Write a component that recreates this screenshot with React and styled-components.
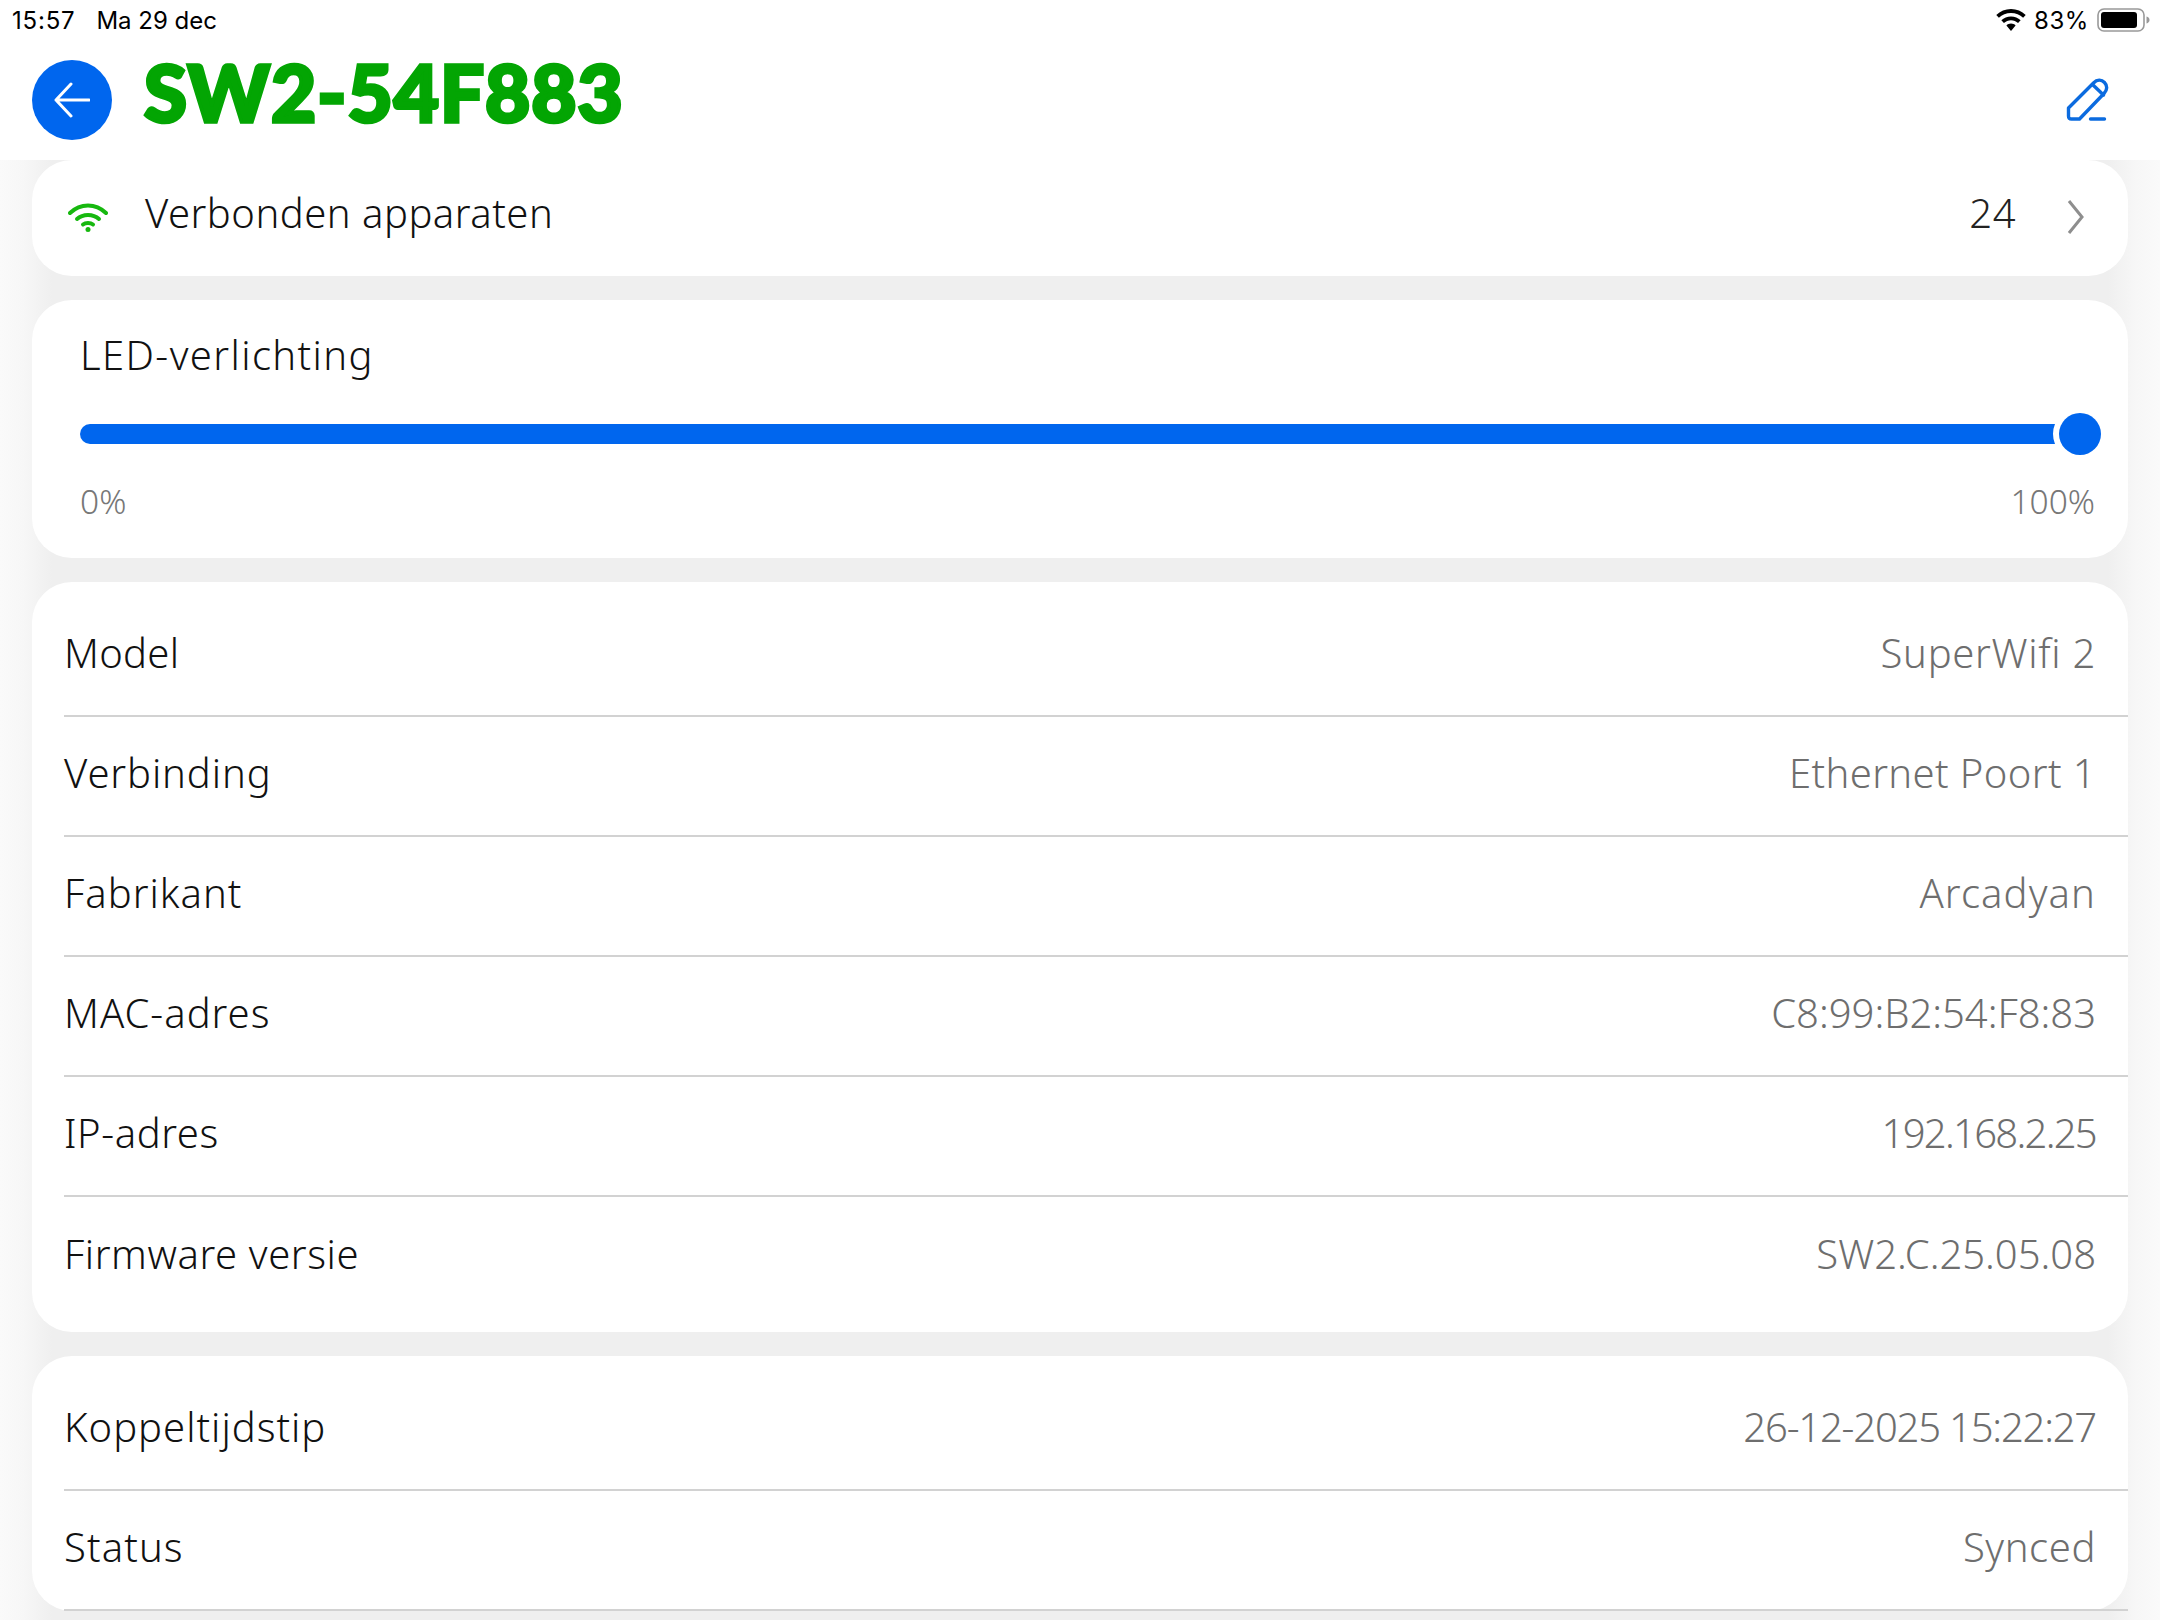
import styled, { createGlobalStyle } from "styled-components";

const GlobalStyle = createGlobalStyle`
  html, body {
    margin: 0;
    padding: 0;
    background: #f7f7f7;
  }
`;

const Screen = styled.div`
  width: 2160px;
  height: 1620px;
  overflow: hidden;
  font-family: "Noto Sans", sans-serif;
  font-weight: 350;
  background: linear-gradient(90deg, #fafafa 0, #f7f7f7 24px, #efefef 52px, #efefef 2108px, #f7f7f7 2136px, #fafafa 100%);
`;

const Header = styled.header`
  height: 160px;
  background: #fff;
`;

const StatusBar = styled.div`
  height: 40px;
  display: flex;
  align-items: center;
  justify-content: space-between;
  padding: 0 10px 0 12px;
  font-family: Inter, sans-serif;
  font-weight: 400;
  font-size: 24px;
  color: #000;
`;

const StatusGroup = styled.div`
  display: flex;
  align-items: center;
  gap: ${(props) => props.$gap}px;
`;

const StatusText = styled.span`
  letter-spacing: ${(props) => props.$spacing || 0}px;
`;

const TitleBar = styled.div`
  height: 80px;
  margin-top: 20px;
  display: flex;
  align-items: center;
  padding: 0 50px 0 32px;
`;

const BackButton = styled.button`
  width: 80px;
  height: 80px;
  border: 0;
  padding: 0;
  border-radius: 50%;
  background: #0066ee;
  display: flex;
  align-items: center;
  justify-content: center;
`;

const Title = styled.h1`
  margin: 0 0 17px 32px;
  flex: 1;
  font-family: Lato, sans-serif;
  font-weight: 900;
  font-size: 78px;
  line-height: 80px;
  letter-spacing: 1px;
  color: #03a503;
  -webkit-text-stroke: 3.5px #03a503;
`;

const Content = styled.main`
  display: flex;
  flex-direction: column;
  gap: 24px;
  padding: 0 32px;
`;

const Card = styled.section`
  background: #fff;
  border-radius: 40px;
  padding-top: ${(props) => props.$top || 0}px;
  padding-bottom: ${(props) => props.$bottom || 0}px;
`;

const LinkRow = styled.div`
  height: 116px;
  display: flex;
  align-items: center;
  padding: 0 43px 0 36px;
  font-size: 40px;
  letter-spacing: 0.5px;
  color: #111;
`;

const RowIcon = styled.span`
  display: flex;
  margin-bottom: 2px;
`;

const LinkLabel = styled.span`
  flex: 1;
  margin: 0 0 11px 37px;
`;

const Count = styled.span`
  color: #222;
  margin: 0 51px 11px 0;
`;

const SliderCard = styled(Card)`
  height: 258px;
  padding: 0 33px 0 48px;
  display: flex;
  flex-direction: column;
`;

const SliderTitle = styled.div`
  margin-top: 27px;
  font-size: 40px;
  line-height: 56px;
  letter-spacing: 1.4px;
  color: #111;
`;

const Track = styled.div`
  margin-top: 41px;
  height: 20px;
  position: relative;
  border-radius: 10px;
  background: #0066ee;
`;

const Thumb = styled.div`
  position: absolute;
  right: -6px;
  top: -11px;
  width: 42px;
  height: 42px;
  border-radius: 50%;
  background: #0066ee;
  box-shadow: 0 0 0 6px #fff;
`;

const SliderLabels = styled.div`
  margin-top: 34px;
  display: flex;
  justify-content: space-between;
  font-size: 33.5px;
  color: #777;
`;

const Row = styled.div`
  height: ${(props) => (props.$last ? "113px" : "111px")};
  margin-left: 32px;
  padding: 0 32px 7px 0;
  display: flex;
  align-items: center;
  justify-content: space-between;
  font-size: 40px;
  border-bottom: ${(props) => (props.$last ? "0" : "2px solid #d2d2d2")};
`;

const Label = styled.span`
  color: #111;
  letter-spacing: ${(props) => props.$spacing}px;
`;

const Value = styled.span`
  color: #6e6e6e;
  letter-spacing: ${(props) => props.$spacing}px;
`;

const deviceRows = [
  { label: "Model", value: "SuperWifi 2", labelSpacing: 0.3, valueSpacing: 0.7 },
  { label: "Verbinding", value: "Ethernet Poort 1", labelSpacing: 0.9, valueSpacing: 0.4 },
  { label: "Fabrikant", value: "Arcadyan", labelSpacing: 1, valueSpacing: 1.1 },
  { label: "MAC-adres", value: "C8:99:B2:54:F8:83", labelSpacing: 1, valueSpacing: 0 },
  { label: "IP-adres", value: "192.168.2.25", labelSpacing: 0.6, valueSpacing: -1.7 },
  { label: "Firmware versie", value: "SW2.C.25.05.08", labelSpacing: 0.6, valueSpacing: 0 },
];

const syncRows = [
  { label: "Koppeltijdstip", value: "26-12-2025 15:22:27", labelSpacing: 1, valueSpacing: -1.2 },
  { label: "Status", value: "Synced", labelSpacing: 1.1, valueSpacing: 0.6 },
];

const WifiIcon = () => (
  <svg width="40" height="29" viewBox="0 0 40 29" fill="none" stroke="#17b80f" strokeWidth="4" strokeLinecap="round">
    <path d="M2 10C12.500 0 27.500 0 38 10" />
    <path d="M9 16C15 10.500 25 10.500 31 16" />
    <path d="M15 21.500C17.500 19.500 22.500 19.500 25 21.500" />
    <circle cx="20" cy="26.500" r="2.500" fill="#17b80f" stroke="none" />
  </svg>
);

const StatusWifi = () => (
  <svg width="30" height="22" viewBox="2.500 0.900 25 18.700" fill="#000">
    <path d="M15 4.200c4 0 7.600 1.500 10.300 4.100l2.200-2.300C24.200 2.800 19.800 .9 15 .9S5.800 2.800 2.500 6l2.200 2.300C7.400 5.700 11 4.200 15 4.200z" />
    <path d="M15 10.400c2.300 0 4.400.9 6 2.400l2.200-2.300c-2.100-2-5-3.300-8.200-3.300s-6.100 1.300-8.200 3.300L9 12.800c1.600-1.500 3.700-2.400 6-2.400z" />
    <path d="M15 13.300c-1.500 0-2.900.6-3.900 1.600L15 19.600l3.900-4.700c-1-1-2.400-1.600-3.900-1.600z" />
  </svg>
);

const Battery = () => (
  <svg width="53" height="24" viewBox="0 0 53 24">
    <rect x="1" y="1" width="46" height="22" rx="6" fill="none" stroke="#999" strokeWidth="1.6" />
    <rect x="4" y="4" width="36" height="16" rx="3" fill="#000" />
    <path d="M49.500 8.500c2 .6 3 1.900 3 3.500s-1 2.900-3 3.500z" fill="#999" />
  </svg>
);

const BackArrow = () => (
  <svg width="36" height="36" viewBox="0 0 36 36" fill="none" stroke="#fff" strokeWidth="3" strokeLinecap="round" strokeLinejoin="round">
    <path d="M35 18H2M17 2L2 18l15 16" />
  </svg>
);

const PenIcon = () => (
  <svg width="44" height="44" viewBox="-1.500 -1.500 44 44" fill="none" stroke="#0b6bdf" strokeWidth="3.400" strokeLinecap="round" strokeLinejoin="round">
    <path d="M1 28.500 26 3.500c3.500-3.500 8-3.500 11 -.5s3 7.500-.5 11L12 39.500H4c-2 0-3-1-3-3z" />
    <path d="M25 5 36 15.500" />
    <path d="M23 39.500h14" />
  </svg>
);

const Chevron = () => (
  <svg width="18" height="38" viewBox="0 0 18 38" fill="none" stroke="#8e8e8e" strokeWidth="3">
    <path d="M2 3l13 16L2 35" />
  </svg>
);

const App = () => (
  <Screen>
    <GlobalStyle />
    <Header>
      <StatusBar>
        <StatusGroup $gap={21}>
          <StatusText $spacing={0.8}>15:57</StatusText>
          <StatusText>Ma 29 dec</StatusText>
        </StatusGroup>
        <StatusGroup $gap={8}>
          <StatusWifi />
          <StatusText $spacing={0.6}>83%</StatusText>
          <Battery />
        </StatusGroup>
      </StatusBar>
      <TitleBar>
        <BackButton>
          <BackArrow />
        </BackButton>
        <Title>SW2-54F883</Title>
        <PenIcon />
      </TitleBar>
    </Header>
    <Content>
      <Card>
        <LinkRow>
          <RowIcon>
            <WifiIcon />
          </RowIcon>
          <LinkLabel>Verbonden apparaten</LinkLabel>
          <Count>24</Count>
          <RowIcon>
            <Chevron />
          </RowIcon>
        </LinkRow>
      </Card>
      <SliderCard>
        <SliderTitle>LED-verlichting</SliderTitle>
        <Track>
          <Thumb />
        </Track>
        <SliderLabels>
          <span>0%</span>
          <span>100%</span>
        </SliderLabels>
      </SliderCard>
      <Card $top={15} $bottom={15}>
        {deviceRows.map((row, i) => (
          <Row key={row.label} $last={i === deviceRows.length - 1}>
            <Label $spacing={row.labelSpacing}>{row.label}</Label>
            <Value $spacing={row.valueSpacing}>{row.value}</Value>
          </Row>
        ))}
      </Card>
      <Card $top={15}>
        {syncRows.map((row) => (
          <Row key={row.label}>
            <Label $spacing={row.labelSpacing}>{row.label}</Label>
            <Value $spacing={row.valueSpacing}>{row.value}</Value>
          </Row>
        ))}
      </Card>
    </Content>
  </Screen>
);

export default App;
